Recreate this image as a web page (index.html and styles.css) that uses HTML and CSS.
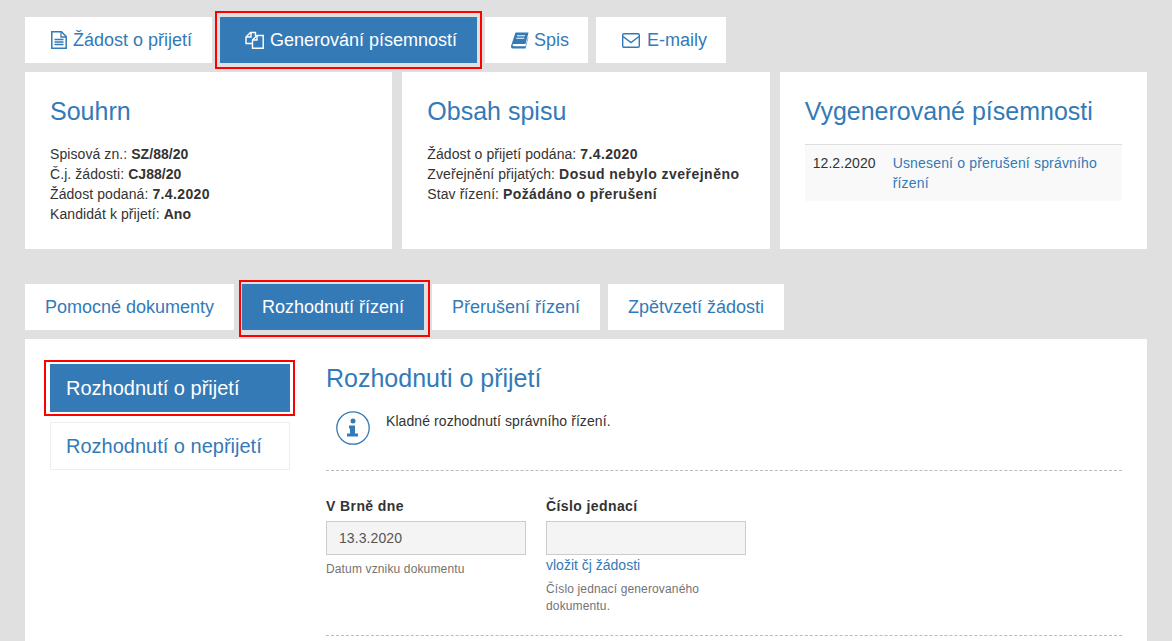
FILE: index.html
```html
<!DOCTYPE html>
<html lang="cs">
<head>
  <meta charset="UTF-8" />
  <title>Generování písemností</title>
  <link rel="stylesheet" href="styles.css">
</head>
<body>

  <nav class="tabs tabs-top">
    <a class="tab tab-zadost" href="#">
      <svg class="tab-icon" width="16" height="18" viewBox="0 0 16 18" fill="none" stroke="currentColor">
        <path d="M0.800 0.800h9.700l4.700 4.700v11.700h-14.400z" stroke-width="1.500"/>
        <path d="M10 1v5h5M3.500 8.500h9M3.500 11h9M3.500 13.500h9" stroke-width="1.300"/>
      </svg>
      Žádost o přijetí
    </a>
    <a class="tab tab-gen active marked" href="#">
      <svg class="tab-icon" width="19" height="18" viewBox="0 0 19 18" fill="none" stroke="currentColor" stroke-width="1.400">
        <path d="M7 12.500h-6v-6.500l4.500-4.500h5v3.500"/>
        <path d="M6 1.500v4.500h-5"/>
        <path d="M7.500 9l4.500-4.500h6.200v12.800h-10.700z"/>
        <path d="M12 4.500v4.500h-4.500"/>
      </svg>
      Generování písemností
    </a>
    <a class="tab tab-spis" href="#">
      <svg class="tab-icon" width="18" height="17" viewBox="0 0 18 17">
        <path fill="currentColor" d="M4.500 0.500h13l-3 11.500h-11.500q-1.400 0-1.500 1t1.400 1.200h11.600l2.700-10v1.800l-2.700 10.500h-12.300q-2.500 0-2.200-2.500z"/>
        <path d="M6 3.700h8M5.300 6.200h8" stroke="#fff" stroke-width="1.100"/>
      </svg>
      Spis
    </a>
    <a class="tab tab-mail" href="#">
      <svg class="tab-icon" width="18" height="15" viewBox="0 0 18 15" fill="none" stroke="currentColor" stroke-width="1.400">
        <rect x="0.700" y="0.700" width="16.600" height="13.600" rx="1.200"/>
        <path d="M1 3.500l8 6 8-6"/>
      </svg>
      E-maily
    </a>
  </nav>

  <div class="cards">
    <section class="card">
      <h2>Souhrn</h2>
      <p>
        Spisová zn.: <b class="plain">SZ/88/20</b><br>
        Č.j. žádosti: <b class="plain">CJ88/20</b><br>
        Žádost podaná: <b>7.4.2020</b><br>
        Kandidát k přijetí: <b class="plain">Ano</b>
      </p>
    </section>
    <section class="card">
      <h2>Obsah spisu</h2>
      <p>
        Žádost o přijetí podána: <b>7.4.2020</b><br>
        Zveřejnění přijatých: <b class="long">Dosud nebylo zveřejněno</b><br>
        Stav řízení: <b>Požádáno o přerušení</b>
      </p>
    </section>
    <section class="card">
      <h2>Vygenerované písemnosti</h2>
      <table class="doc-table">
        <tr>
          <td class="doc-date">12.2.2020</td>
          <td class="doc-name"><a href="#">Usnesení o přerušení správního řízení</a></td>
        </tr>
      </table>
    </section>
  </div>

  <nav class="tabs tabs-sub">
    <a class="tab tab-pomocne" href="#">Pomocné dokumenty</a>
    <a class="tab tab-rozh active marked" href="#">Rozhodnutí řízení</a>
    <a class="tab tab-preruseni" href="#">Přerušení řízení</a>
    <a class="tab tab-zpetvzeti" href="#">Zpětvzetí žádosti</a>
  </nav>

  <main class="panel">
    <aside class="side-nav">
      <a class="side-link active marked" href="#">Rozhodnutí o přijetí</a>
      <a class="side-link" href="#">Rozhodnutí o nepřijetí</a>
    </aside>

    <div class="content">
      <h2>Rozhodnuti o přijetí</h2>

      <div class="info">
        <svg class="info-icon" width="34" height="34" viewBox="0 0 34 34">
          <circle cx="17" cy="17" r="16.200" fill="none" stroke="#337ab7" stroke-width="1.300"/>
          <circle cx="17" cy="10" r="2.500" fill="#337ab7"/>
          <path fill="#337ab7" d="M13 14.500h6v8h3v3h-11v-3h3v-5h-1z"/>
        </svg>
        <p>Kladné rozhodnutí správního řízení.</p>
      </div>

      <div class="form-row">
        <div class="field">
          <label>V Brně dne</label>
          <div class="fake-input">13.3.2020</div>
          <small>Datum vzniku dokumentu</small>
        </div>
        <div class="field">
          <label>Číslo jednací</label>
          <div class="fake-input"></div>
          <a class="field-link" href="#">vložit čj žádosti</a>
          <small>Číslo jednací generovaného dokumentu.</small>
        </div>
      </div>
    </div>
  </main>

</body>
</html>
```
FILE: styles.css
```css
* {
  box-sizing: border-box;
}

html, body {
  height: 641px;
  overflow: hidden;
}

body {
  font-family: "Liberation Sans", Arial, sans-serif;
  font-size: 14px;
  line-height: 20px;
  letter-spacing: 0.08px;
  color: #333;
  background-color: #e0e0e0;
  margin: 0;
  padding: 17px 25px 0;
}

a {
  color: #337ab7;
  text-decoration: none;
}

/* zalozky */
.tabs {
  display: flex;
  gap: 8px;
}

.tab {
  position: relative;
  display: flex;
  align-items: center;
  justify-content: center;
  height: 46px;
  background: white;
  font-size: 18px;
  letter-spacing: 0;
}

.tabs-top .tab {
  justify-content: flex-start;
  padding-left: 26px;
  gap: 6px;
}

.tab.active {
  background-color: #337ab7;
  color: white;
}

/* cervene oramovani */
.marked::after {
  content: "";
  position: absolute;
  inset: -6px -5px;
  border: 2px solid #f00;
}

.tabs-sub .marked::after {
  inset: -4px -6px -7px -3px;
}

.side-link.marked::after {
  inset: -5px -6px -5px -7px;
}

.tabs-top .tab-gen {
  padding-left: 25px;
}

.tabs-top .tab-spis {
  gap: 5px;
}

.tabs-top .tab-mail {
  gap: 7px;
}

.tab-zadost { width: 187px; }
.tab-gen { width: 257px; }
.tab-spis { width: 103px; }
.tab-mail { width: 130px; }

.tab-pomocne { width: 209px; }
.tab-rozh { width: 182px; }
.tab-preruseni { width: 168px; }
.tab-zpetvzeti { width: 176px; }

/* karty */
.cards {
  display: grid;
  grid-template-columns: 1fr 1fr 1fr;
  gap: 10px;
  margin-top: 9px;
  height: 177px;
}

.card {
  background: white;
  padding: 25px;
}

h2 {
  font-size: 25px;
  font-weight: normal;
  line-height: 28px;
  letter-spacing: 0;
  color: #337ab7;
  margin: 0;
}

.card p {
  margin: 19px 0 0;
}

.card b {
  letter-spacing: 0.38px;
}

.card b.plain {
  letter-spacing: 0.05px;
}

.card b.long {
  letter-spacing: 0.47px;
}

.doc-table {
  width: 100%;
  margin-top: 19px;
  border-collapse: collapse;
  background-color: #f9f9f9;
  border-top: 1px solid #ddd;
}

.doc-table td {
  padding: 8px;
  vertical-align: top;
}

.doc-date {
  width: 80px;
}

.doc-name {
  letter-spacing: 0.17px;
}

/* spodni cast */
.tabs-sub {
  margin-top: 35px;
}

.panel {
  display: flex;
  background: white;
  margin-top: 9px;
  padding: 25px;
  height: 320px;
}

.side-nav {
  width: 240px;
  flex-shrink: 0;
  display: flex;
  flex-direction: column;
  gap: 10px;
}

.side-link {
  position: relative;
  display: block;
  height: 48px;
  line-height: 46px;
  padding: 0 15px;
  font-size: 20px;
  letter-spacing: 0;
  border: 1px solid #eee;
}

.side-link.active {
  background-color: #337ab7;
  border-color: #337ab7;
  color: white;
}

.content {
  flex: 1;
  margin-left: 36px;
}

.info {
  display: flex;
  align-items: flex-start;
  gap: 16px;
  padding: 18px 10px 0;
  margin-top: 1px;
  height: 78px;
  border-bottom: 1px dashed #bbb;
}

.info p {
  margin: 0;
}

.form-row {
  display: flex;
  gap: 20px;
  padding-top: 25px;
  padding-bottom: 20px;
  border-bottom: 1px dashed #bbb;
  height: 165px;
}

.field {
  width: 200px;
}

.field label {
  display: block;
  font-weight: bold;
  letter-spacing: 0.4px;
  margin-bottom: 5px;
}

.fake-input {
  height: 34px;
  padding: 6px 12px;
  background-color: #f4f4f4;
  border: 1px solid #ccc;
  color: #555;
}

.field-link {
  display: block;
  margin-bottom: 1px;
  letter-spacing: 0;
}

.field small {
  display: block;
  margin-top: 6px;
  font-size: 12px;
  letter-spacing: 0.14px;
  color: #737373;
  line-height: 17px;
}
```
